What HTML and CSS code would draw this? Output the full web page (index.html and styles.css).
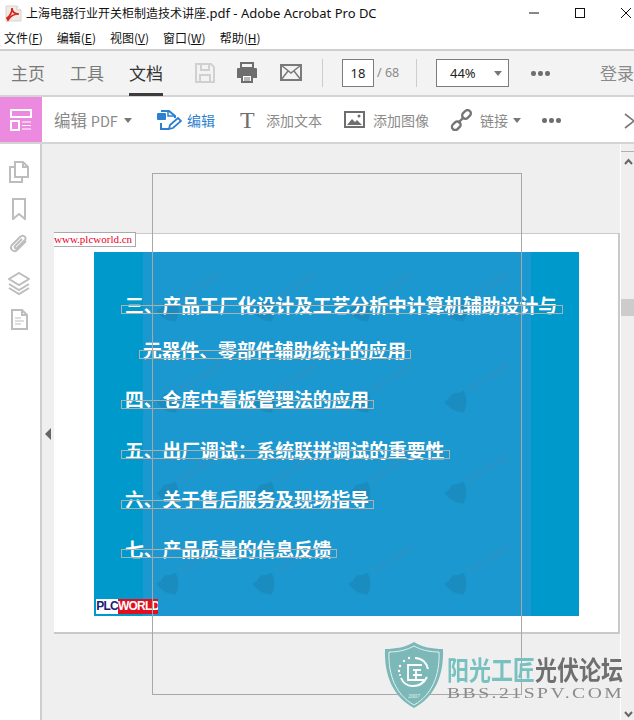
FILE: index.html
```html
<!DOCTYPE html>
<html lang="zh">
<head>
<meta charset="utf-8">
<title>上海电器行业开关柜制造技术讲座.pdf - Adobe Acrobat Pro DC</title>
<link rel="stylesheet" href="styles.css">
</head>
<body>
<div class="app">
  <header class="titlebar">
    <svg class="pdficon" width="17" height="17" viewBox="0 0 17 17"><path d="M1 1h11l4 4v11H1z" fill="#efeae6" stroke="#d8d4d0"/><path d="M12 1v4h4" fill="#fff" stroke="#cfcac6"/><path d="M2 13c3-2 5-6 5-10 0 4 3 6 7 6-5 0-8 1-11 6z" fill="none" stroke="#d8261c" stroke-width="1.700"/></svg>
    <span class="title"><span class="title-cn">上海电器行业开关柜制造技术讲座</span>.pdf - Adobe Acrobat Pro DC</span>
    <div class="winbtns">
      <svg width="12" height="12" viewBox="0 0 12 12"><path d="M1 6h10" stroke="#111" stroke-width="1"/></svg>
      <svg width="12" height="12" viewBox="0 0 12 12"><rect x="1.500" y="1.500" width="9" height="9" fill="none" stroke="#111"/></svg>
      <svg width="12" height="12" viewBox="0 0 12 12"><path d="M1 1l10 10M11 1L1 11" stroke="#111" fill="none"/></svg>
    </div>
  </header>
  <nav class="menubar">
    <span>文件(<u>F</u>)</span><span>编辑(<u>E</u>)</span><span>视图(<u>V</u>)</span><span>窗口(<u>W</u>)</span><span>帮助(<u>H</u>)</span>
  </nav>
  <div class="toolbar">
    <span class="tab">主页</span><span class="tab">工具</span><span class="tab active">文档</span>
    <svg class="save" width="22" height="22" viewBox="0 0 22 22"><path d="M2 2h15l3 3v15H2z" fill="none" stroke="#d0d0d0" stroke-width="2"/><path d="M7 2v6h8V2M6 20v-7h10v7" fill="none" stroke="#d0d0d0" stroke-width="2"/></svg>
    <svg class="print" width="22" height="22" viewBox="0 0 22 22"><path d="M5 1h12v5H5z" fill="none" stroke="#6e6e6e" stroke-width="2"/><path d="M2 6h18a1 1 0 0 1 1 1v9h-4v-3H5v3H1V7a1 1 0 0 1 1-1z" fill="#6e6e6e"/><path d="M6 13h10v7H6z" fill="#fff" stroke="#6e6e6e" stroke-width="2"/><path d="M8 16h6M8 18h6" stroke="#6e6e6e"/></svg>
    <svg class="mail" width="22" height="18" viewBox="0 0 22 18"><rect x="1" y="1" width="20" height="15" fill="none" stroke="#7a7a7a" stroke-width="2"/><path d="M1 1l10 8 10-8M1 16l7-9M21 16l-7-9" fill="none" stroke="#7a7a7a" stroke-width="1.500"/></svg>
    <i class="sep sep1"></i>
    <span class="pagebox">18</span><span class="pagetotal">/ 68</span>
    <i class="sep sep2"></i>
    <div class="zoombox"><span>44%</span><b class="caret"></b></div>
    <span class="dots dots1"><i></i><i></i><i></i></span>
    <span class="login">登录</span>
  </div>
  <div class="toolbar2">
    <div class="pink">
      <svg width="22" height="22" viewBox="0 0 22 22"><rect x="1" y="1" width="20" height="7" fill="none" stroke="#fff" stroke-width="2"/><rect x="1" y="12" width="8" height="9" fill="none" stroke="#fff" stroke-width="2"/><path d="M12 13h9M12 16.500h9M12 20h9" stroke="#fff"/></svg>
    </div>
    <span class="editpdf">编辑 <span class="pdf-word">PDF</span></span><b class="caret c2"></b>
    <svg class="editicon" width="25" height="25" viewBox="0 0 25 25"><rect x="0" y="5" width="9" height="7" rx="1" fill="#2d7fd0"/><path d="M4 3h8l6 5v2M4 15v6h8" fill="none" stroke="#2d7fd0" stroke-width="2"/><path d="M11 3v5h7" fill="none" stroke="#2d7fd0" stroke-width="1.500"/><path d="M12 21l1-4 8-7 3 3-8 7z" fill="none" stroke="#2d7fd0" stroke-width="1.800"/></svg>
    <span class="t-edit">编辑</span>
    <span class="big-t">T</span>
    <span class="tool t-addtext">添加文本</span>
    <svg class="imgicon" width="21" height="17" viewBox="0 0 21 17"><rect x="1" y="1" width="19" height="15" fill="none" stroke="#6e6e6e" stroke-width="2"/><path d="M3 14l5-6 3 3 2-2 5 5z" fill="#6e6e6e"/><circle cx="15" cy="5" r="1.500" fill="#6e6e6e"/></svg>
    <span class="tool t-addimg">添加图像</span>
    <svg class="linkicon" width="22" height="22" viewBox="0 0 22 22"><g fill="none" stroke="#757575" stroke-width="2.400"><rect x="11" y="1.500" width="9.500" height="6.500" rx="3.200" transform="rotate(-45 15.700 4.700) translate(0 1)"/><rect x="1.500" y="13.500" width="9.500" height="6.500" rx="3.200" transform="rotate(-45 6.200 16.700)"/><path d="M8 14l6-6"/></g></svg>
    <span class="tool t-link">链接</span><b class="caret c3"></b>
    <span class="dots dots2"><i></i><i></i><i></i></span>
    <svg class="closex" width="20" height="16" viewBox="0 0 20 16"><path d="M1 1l18 14M19 1L1 15" stroke="#777" stroke-width="1.600" fill="none"/></svg>
  </div>
  <main class="workspace">
    <aside class="rail">
      <svg width="20" height="22" viewBox="0 0 20 22"><g fill="none" stroke="#bdbdbd" stroke-width="2"><path d="M6 1h8l5 5v10H6z"/><path d="M14 1v5h5"/><path d="M6 6H1v15h12v-5"/></g></svg>
      <svg width="14" height="22" viewBox="0 0 14 22"><path d="M1 1h12v20l-6-5-6 5z" fill="none" stroke="#bdbdbd" stroke-width="2"/></svg>
      <svg class="rail-clip" width="20" height="22" viewBox="0 0 20 22"><path d="M17 7l-9 9c-3 3-8-1-5-5l8-8c3-3 7 0 5 3l-8 8c-1 1-3 0-2-2l7-7" fill="none" stroke="#bdbdbd" stroke-width="2"/></svg>
      <svg width="22" height="24" viewBox="0 0 22 24"><g fill="none" stroke="#bdbdbd" stroke-width="2"><path d="M11 1l10 6-10 6L1 7z"/><path d="M1 12l10 6 10-6"/><path d="M1 16l10 6 10-6"/></g></svg>
      <svg class="rail-doc" width="17" height="21" viewBox="0 0 17 21"><g fill="none" stroke="#bdbdbd" stroke-width="2"><path d="M1 1h10l5 5v14H1z"/><path d="M11 1v5h5"/></g><path d="M4 9h6M4 12h9M4 15h6" stroke="#bdbdbd"/></svg>
    </aside>
    <section class="docarea">
      <span class="collapse"></span>
      <div class="pdfpage">
        <div class="stamp">www.plcworld.cn</div>
        <div class="slide">
          <div class="slide-light">
            <svg class="wm-pattern" width="388" height="364">
              <defs>
                <pattern id="mark" patternUnits="userSpaceOnUse" width="96" height="91">
                  <path d="M27 49c3 2 7 3 11 3 0 8-4 15-11 19-7-4-11-11-11-19 4 0 8-1 11-3z" transform="rotate(-30 27 60)" class="wm-shield"/>
                  <text x="38" y="50" transform="rotate(-32 38 50)" class="wm-small">阳光工匠论坛</text>
                </pattern>
              </defs>
              <rect width="388" height="364" fill="url(#mark)"/>
            </svg>
          </div>
          <p class="line l1">三、产品工厂化设计及工艺分析中计算机辅助设计与</p>
          <p class="line l2">元器件、零部件辅助统计的应用</p>
          <p class="line l3">四、仓库中看板管理法的应用</p>
          <p class="line l4">五、出厂调试：系统联拼调试的重要性</p>
          <p class="line l5">六、关于售后服务及现场指导</p>
          <p class="line l6">七、产品质量的信息反馈</p>
          <i class="box b1"></i><i class="box b2"></i><i class="box b3"></i><i class="box b4"></i><i class="box b5"></i><i class="box b6"></i>
          <div class="plc"><span class="plc-a">PLC</span><span class="plc-b">WORLD</span></div>
        </div>
      </div>
      <i class="frame"></i>
    </section>
    <aside class="scrollbar">
      <i class="sb-top"></i>
      <svg class="sb-up" width="9" height="7" viewBox="0 0 9 7"><path d="M1 6l3.500-4L8 6" fill="none" stroke="#666" stroke-width="2"/></svg>
      <i class="sb-thumb"></i>
      <svg class="sb-down" width="9" height="7" viewBox="0 0 9 7"><path d="M1 1l3.500 4L8 1" fill="none" stroke="#666" stroke-width="2"/></svg>
    </aside>
  </main>
  <div class="watermark">
    <svg width="60" height="67" viewBox="0 0 60 67"><path d="M30 0c8 5 18 7 29 7 1 26-8 48-29 59C9 55 0 33 1 7c11 0 21-2 29-7z" fill="#7db8b8"/><path d="M30 4c7 4 16 6 25 6 1 23-7 43-25 53C12 53 4 33 5 10c9 0 18-2 25-6z" fill="none" stroke="#e3f0f0"/><path d="M31 16c7 0 12 5 13 11M43 35c-3 6-8 9-14 9-5 0-10-3-12-8" fill="none" stroke="#fff" stroke-width="2"/><path d="M38 23H24v15h16M29 28h8M32 28v10M29 33h9" fill="none" stroke="#fff" stroke-width="1.800"/><g fill="#fff"><circle cx="25" cy="16" r="1.200"/><circle cx="20" cy="19" r="1.200"/><circle cx="16" cy="24" r="1.200"/><circle cx="15" cy="29" r="1.200"/><circle cx="16" cy="33" r="1"/></g><text x="30" y="56" text-anchor="middle" class="wm-year">2007</text></svg>
    <div class="wm-text">
      <div class="wm-cn"><span class="wm-teal">阳光工匠</span><span class="wm-gray">光伏论坛</span></div>
      <div class="wm-en">BBS.21SPV.COM</div>
    </div>
  </div>
</div>
</body>
</html>
```
FILE: styles.css
```css
* { box-sizing: border-box; }
html, body { margin: 0; height: 100%; overflow: hidden; }
body { font-family: "Noto Sans CJK SC", "Liberation Sans", sans-serif; background: #fff; }
.app { position: relative; width: 634px; height: 720px; overflow: hidden; display: flex; flex-direction: column; }

.titlebar { height: 26px; display: flex; align-items: center; padding-left: 5px; color: #111; position: relative; flex: none; }
.pdficon { flex: none; margin-right: 4px; }
.title { font-family: "Noto Sans", "Noto Sans CJK SC", sans-serif; font-size: 13px; white-space: nowrap; }
.title-cn { font-family: "Noto Sans CJK SC", sans-serif; font-size: 12px; }
.winbtns { position: absolute; right: 2px; top: 7px; display: flex; gap: 34px; }
.menubar { height: 23px; flex: none; display: flex; align-items: center; gap: 14px; padding-left: 4px; font-size: 12px; color: #111; }
.menubar u { text-decoration: underline; }

.toolbar { position: relative; height: 48px; background: #f3f3f3; border-top: 2px solid #cfcfcf; border-bottom: 2px solid #d4d4d4; flex: none; }
.tab { position: absolute; top: 10px; font-size: 17px; color: #7a7a7a; line-height: 24px; }
.tab:nth-child(1) { left: 11px; }
.tab:nth-child(2) { left: 70px; }
.tab.active { left: 129px; color: #333; height: 35px; }
.tab.active::after { content: ""; position: absolute; left: 0; right: 0; bottom: 0; height: 3px; background: #3c3c3c; }
.save { position: absolute; left: 194px; top: 11px; }
.print { position: absolute; left: 236px; top: 11px; }
.mail { position: absolute; left: 280px; top: 13px; }
.sep { position: absolute; top: 8px; width: 1px; height: 28px; background: #cdcdcd; }
.sep1 { left: 322px; }
.sep2 { left: 416px; }
.pagebox { position: absolute; left: 342px; top: 8px; width: 32px; height: 28px; background: #fff; border: 1px solid #7c7c7c; font: 13px/26px "Noto Sans", sans-serif; color: #222; text-align: center; }
.pagetotal { position: absolute; left: 377px; top: 11px; font: 12.500px/22px "Noto Sans", sans-serif; color: #8a8a8a; }
.zoombox { position: absolute; left: 436px; top: 8px; width: 73px; height: 28px; background: #fff; border: 1px solid #7c7c7c; font: 13px/26px "Noto Sans", sans-serif; color: #222; padding-left: 13px; }
.caret { position: absolute; width: 0; height: 0; border-left: 4px solid transparent; border-right: 4px solid transparent; border-top: 5px solid #777; }
.zoombox .caret { right: 6px; top: 11px; }
.dots { position: absolute; display: flex; gap: 2.500px; }
.dots i { width: 4.500px; height: 4.500px; border-radius: 50%; background: #6e6e6e; }
.dots1 { left: 531px; top: 20px; }
.login { position: absolute; left: 600px; top: 10px; font-size: 17px; line-height: 24px; color: #8a8a8a; white-space: nowrap; }

.toolbar2 { position: relative; height: 47px; background: #fff; border-bottom: 2px solid #d4d4d4; flex: none; }
.pink { position: absolute; left: 0; top: 0; width: 42px; height: 45px; background: #ec8ae0; display: flex; align-items: center; justify-content: center; }
.editpdf { position: absolute; left: 54px; top: 11px; font-size: 16.500px; line-height: 24px; color: #8a8a8a; white-space: nowrap; }
.pdf-word { font-size: 14.500px; }
.c2 { left: 124px; top: 21px; }
.editicon { position: absolute; left: 157px; top: 11px; }
.t-edit { position: absolute; left: 187px; top: 12px; font-size: 14px; line-height: 22px; color: #2d7fd0; }
.big-t { position: absolute; left: 240px; top: 9px; font: 24px/28px "Liberation Serif", serif; color: #6e6e6e; }
.tool { position: absolute; top: 12px; font-size: 14px; line-height: 22px; color: #8a8a8a; white-space: nowrap; }
.t-addtext { left: 266px; }
.imgicon { position: absolute; left: 344px; top: 14px; }
.t-addimg { left: 373px; }
.linkicon { position: absolute; left: 450px; top: 12px; }
.t-link { left: 480px; }
.c3 { left: 513px; top: 21px; }
.dots2 { left: 542px; top: 21px; }
.closex { position: absolute; left: 624px; top: 16px; }

.workspace { flex: 1; display: flex; min-height: 0; }
.rail { width: 42px; flex: none; background: #fff; border-right: 2px solid #cfcfcf; display: flex; flex-direction: column; align-items: center; gap: 15px; padding: 17px 2px 0 0; }
.rail-clip { margin-top: -1px; margin-bottom: 1px; }
.rail-doc { margin-top: -2px; }
.docarea { position: relative; flex: 1; background: #efefef; overflow: hidden; }
.collapse { position: absolute; left: 3px; top: 284px; width: 0; height: 0; border-top: 6px solid transparent; border-bottom: 6px solid transparent; border-right: 6px solid #666; }
.pdfpage { position: absolute; left: 12px; top: 89px; width: 566px; height: 401px; background: #fff; border: 2px solid #c9c9c9; border-left: 0; border-top-width: 1px; }
.stamp { position: absolute; left: 0; top: -2px; width: 82px; height: 15px; background: #fff; border: 1px solid #aaa; border-left: 0; color: #e8002a; font: 11px/13px "Liberation Serif", serif; white-space: nowrap; z-index: 1; }
.slide { position: absolute; left: 40px; top: 18px; width: 485px; height: 364px; background: #0099cc; overflow: hidden; }
.slide-light { position: absolute; left: 49px; top: 0; width: 388px; height: 100%; background: #1b98cf; }
.wm-pattern { display: block; filter: blur(0.6px); }
.wm-shield { fill: #1a8cc0; }
.wm-small { font: 700 8px "Noto Sans CJK SC", sans-serif; fill: #2a93c6; }
.line { position: absolute; margin: 0; font-size: 18.800px; font-weight: 700; line-height: 24px; color: #fff; white-space: nowrap; }
.l1 { left: 31px; top: 41px; }
.l2 { left: 49px; top: 86px; }
.l3 { left: 31px; top: 135px; }
.l4 { left: 31px; top: 186px; }
.l5 { left: 31px; top: 235px; }
.l6 { left: 31px; top: 285px; }
.box { position: absolute; height: 9px; border: 1px solid #aeb0ae; }
.b1 { left: 27px; top: 53px; width: 442px; }
.b2 { left: 45px; top: 98px; width: 272px; }
.b3 { left: 27px; top: 148px; width: 253px; }
.b4 { left: 27px; top: 198px; width: 329px; }
.b5 { left: 27px; top: 248px; width: 253px; }
.b6 { left: 27px; top: 297px; width: 216px; }
.plc { position: absolute; left: 2px; top: 347px; width: 62px; height: 15px; display: flex; font: 700 12px/15px "Liberation Sans", sans-serif; overflow: hidden; }
.plc-a { background: #fff; color: #1a1a78; width: 22px; flex: none; text-align: center; letter-spacing: -0.800px; }
.plc-b { background: #e01020; color: #fff; flex: 1; min-width: 0; text-align: center; letter-spacing: -0.800px; }
.frame { position: absolute; left: 110px; top: 29px; width: 370px; height: 522px; border: 1px solid #a8a8a8; pointer-events: none; }

.scrollbar { position: relative; width: 14px; flex: none; background: #efefef; border-left: 1px solid #fff; }
.sb-top { position: absolute; left: 0; right: 0; top: 7px; height: 1px; background: #b0b0b0; }
.sb-up { position: absolute; left: 3px; top: 14px; }
.sb-thumb { position: absolute; left: 0; right: 0; top: 155px; height: 17px; background: #cccccc; }
.sb-down { position: absolute; left: 3px; top: 567px; }

.watermark { position: absolute; left: 384px; top: 642px; display: flex; gap: 3px; pointer-events: none; }
.wm-year { font: 6px "Liberation Serif", serif; fill: #e3f0f0; }
.wm-text { padding-top: 11px; width: 177px; }
.wm-cn { font-size: 22px; font-weight: 700; line-height: 30px; white-space: nowrap; transform: scaleY(1.200); transform-origin: center; }
.wm-teal { color: #79c0c0; }
.wm-gray { color: #6f6f6f; }
.wm-en { margin-top: 4px; font: 14px/13px "Liberation Serif", serif; letter-spacing: 1.800px; color: #8a8a8a; white-space: nowrap; transform: scaleX(1.400); transform-origin: left center; }
```
